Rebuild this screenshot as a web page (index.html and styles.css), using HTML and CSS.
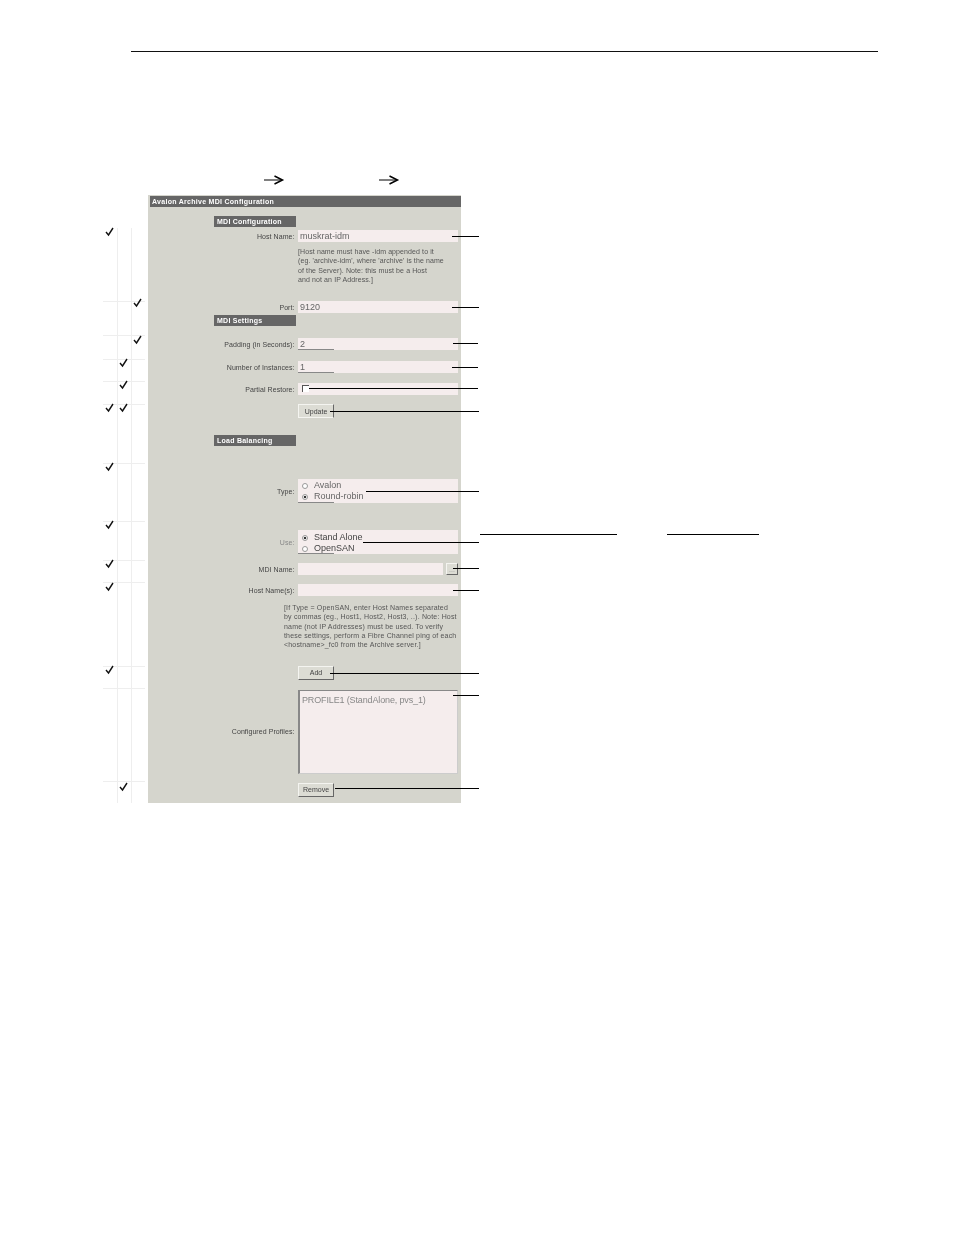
FILE: index.html
```html
<!DOCTYPE html>
<html lang="en">
<head>
<meta charset="utf-8">
<title>Avalon Archive MDI Configuration</title>
<link rel="stylesheet" href="styles.css">
</head>
<body>
<div class="page">
  <hr class="top-rule">
  <section class="panel">
    <h1 class="title">Avalon Archive MDI Configuration</h1>

    <h2 class="section s-config">MDI Configuration</h2>
    <div class="row r-host"><label class="lbl">Host Name:</label><div class="field">muskrat-idm</div></div>
    <p class="help h-host">[Host name must have -idm appended to it<br>(eg. 'archive-idm', where 'archive' is the name<br>of the Server). Note: this must be a Host<br>and not an IP Address.]</p>
    <div class="row r-port"><label class="lbl">Port:</label><div class="field">9120</div></div>

    <h2 class="section s-settings">MDI Settings</h2>
    <div class="row r-padding"><label class="lbl">Padding (in Seconds):</label><div class="field under">2</div></div>
    <div class="row r-instances"><label class="lbl">Number of Instances:</label><div class="field under">1</div></div>
    <div class="row r-partial"><label class="lbl">Partial Restore:</label><div class="field"><span class="checkbox"></span></div></div>
    <div class="row r-update"><span class="lbl"></span><button class="btn btn-update">Update</button></div>

    <h2 class="section s-balance">Load Balancing</h2>
    <div class="row r-type"><label class="lbl">Type:</label>
      <div class="field radios under">
        <div class="opt"><span class="radio"></span>Avalon</div>
        <div class="opt"><span class="radio on"></span>Round-robin</div>
      </div>
    </div>
    <div class="row r-use"><label class="lbl lbl-dim">Use:</label>
      <div class="field radios radios-strong under">
        <div class="opt"><span class="radio on"></span>Stand Alone</div>
        <div class="opt"><span class="radio"></span>OpenSAN</div>
      </div>
    </div>
    <div class="row r-mdi"><label class="lbl">MDI Name:</label><div class="field field-short"></div><button class="btn btn-dots">...</button></div>
    <div class="row r-hosts"><label class="lbl">Host Name(s):</label><div class="field"></div></div>
    <p class="help h-hosts">[If Type = OpenSAN, enter Host Names separated<br>by commas (eg., Host1, Host2, Host3, ..). Note: Host<br>name (not IP Addresses) must be used. To verify<br>these settings, perform a Fibre Channel ping of each<br>&lt;hostname&gt;_fc0 from the Archive server.]</p>
    <div class="row r-add"><span class="lbl"></span><button class="btn">Add</button></div>
    <div class="row r-profiles"><label class="lbl">Configured Profiles:</label><div class="listbox">PROFILE1 (StandAlone, pvs_1)</div></div>
    <div class="row r-remove"><span class="lbl"></span><button class="btn">Remove</button></div>
  </section>

  <svg class="overlay" width="954" height="1235" viewBox="0 0 954 1235" aria-hidden="true">
    <g class="grid-lines">
      <path d="M117.5 228V803M131.5 228V803"/>
      <path d="M103 301.5H145M103 335.5H145M103 359.5H145M103 381.5H145M103 404.5H145M103 463.5H145M103 521.5H145M103 560.5H145M103 582.5H145M103 666.5H145M103 688.5H145M103 781.5H145"/>
    </g>
    <g class="leaders">
      <path d="M452 236.500H479M452 307.500H479M453 343.500H478M452 367.500H478M309 388.500H478M330 411.500H479M366 491.500H479M480 534.500H617M667 534.500H759M363 542.500H479M453 568.500H479M453 590.500H479M330 673.500H479M453 695.500H479M335 788.500H479"/>
    </g>
    <g class="arrows">
      <path class="shaft" d="M264 180H281M379 180H396"/>
      <path class="head" d="M274.500 176L282.500 180L274.500 184M389.500 176L397.500 180L389.500 184"/>
    </g>
    <g class="checks">
      <path d="M106 232l2.500 3 4.500-7"/>
      <path d="M134 303l2.500 3 4.500-7"/>
      <path d="M134 340l2.500 3 4.500-7"/>
      <path d="M120 363l2.500 3 4.500-7"/>
      <path d="M120 385l2.500 3 4.500-7"/>
      <path d="M106 408l2.500 3 4.500-7"/>
      <path d="M120 408l2.500 3 4.500-7"/>
      <path d="M106 467l2.500 3 4.500-7"/>
      <path d="M106 525l2.500 3 4.500-7"/>
      <path d="M106 564l2.500 3 4.500-7"/>
      <path d="M106 587l2.500 3 4.500-7"/>
      <path d="M106 670l2.500 3 4.500-7"/>
      <path d="M120 787l2.500 3 4.500-7"/>
    </g>
  </svg>
</div>
</body>
</html>
```
FILE: styles.css
```css
* { box-sizing: border-box; }
html, body { margin: 0; padding: 0; background: #fff; }
.page { position: relative; width: 954px; height: 1235px; padding-top: 51px; overflow: hidden; font-family: "Liberation Sans", Arial, sans-serif; }
.top-rule { margin: 0 0 0 131px; width: 747px; height: 1px; border: 0; background: #111; }
.panel { margin: 143px 0 0 148px; width: 313px; height: 608px; padding-top: 1px; padding-left: 2px; background: #d5d5cd; color: #555; font-size: 7px; filter: blur(.3px); }
.title { margin: 0; height: 11px; line-height: 11px; padding-left: 2px; background: #666; color: #fff; font-size: 7px; font-weight: bold; letter-spacing: .04em; }
.section { margin: 0 0 0 64px; width: 82px; height: 11px; line-height: 11px; padding-left: 3px; background: #666; color: #fff; font-size: 7px; font-weight: bold; letter-spacing: .035em; }
.row { display: flex; align-items: center; }
.lbl { width: 146px; flex: none; text-align: right; padding: 0 1.500px 0 0; font-size: 7px; color: #444; letter-spacing: .06px; }
.lbl-dim { color: #888; }
.field { width: 160px; height: 12px; margin-left: 2px; padding-left: 2px; background: #f5eded; color: #666; font-size: 9px; line-height: 12px; }
.field-short { width: 145px; }
.under { position: relative; }
.under::after { content: ""; position: absolute; left: 0; bottom: 0; width: 36px; height: 1px; background: #888; }
.help { margin: 0; font-size: 7px; line-height: 9.3px; color: #555; letter-spacing: .1px; }
.h-hosts { letter-spacing: .18px; }
.checkbox { display: inline-block; width: 7px; height: 7px; margin: 2px 0 0 2px; background: #fff; border-top: 1px solid #555; border-left: 1px solid #555; vertical-align: top; }
.btn { width: 36px; height: 14px; margin: 0 0 0 2px; padding: 0; background: #dcdcd4; border: 1px solid; border-color: #f4f4f0 #666 #666 #f4f4f0; color: #444; font: 7px "Liberation Sans", Arial, sans-serif; }
.btn-update { border-bottom-color: #f4f4f0; }
.btn-dots { width: 12px; height: 12px; margin-left: 3px; color: #999; }
.radios { height: 24px; padding: 1px 0 0 4px; line-height: 11px; }
.radios-strong { padding-top: 2px; color: #444; }
.opt { display: flex; align-items: center; height: 11px; }
.radio { width: 6px; height: 6px; margin-right: 6px; border: 1px solid #999; border-radius: 50%; background: #fff; }
.radio.on { background: radial-gradient(circle, #333 0 1.4px, #fff 1.6px); }
.listbox { width: 160px; height: 84px; margin-left: 2px; padding: 3px 2px; background: #f5eded; border: 1px solid; border-width: 1px 1px 1px 2px; border-color: #888 #ccc #ccc #888; color: #888; font-size: 9px; line-height: 12px; letter-spacing: -.14px; }

.s-config { margin-top: 9px; }
.r-host { margin-top: 3px; }
.h-host { margin: 5px 0 0 148px; }
.r-port { margin-top: 17px; }
.s-settings { margin-top: 2px; }
.r-padding { margin-top: 12px; }
.r-instances { margin-top: 11px; }
.r-partial { margin-top: 10px; }
.r-update { margin-top: 9px; }
.s-balance { margin-top: 17px; }
.r-type { margin-top: 33px; }
.r-use { margin-top: 27px; }
.r-mdi { margin-top: 9px; }
.r-hosts { margin-top: 9px; }
.h-hosts { margin: 7px 0 0 134px; }
.r-add { margin-top: 16px; }
.r-profiles { margin-top: 10px; }
.r-remove { margin-top: 9px; }

.overlay { position: absolute; left: 0; top: 0; pointer-events: none; }
.grid-lines path { stroke: #eee; stroke-width: 1; fill: none; }
.leaders path { stroke: #000; stroke-width: 1; fill: none; }
.arrows .shaft { stroke: #000; stroke-width: 1; fill: none; }
.arrows .head { stroke: #000; stroke-width: 1.5; fill: none; }
.checks path { stroke: #111; stroke-width: 1.4; fill: none; }
```
